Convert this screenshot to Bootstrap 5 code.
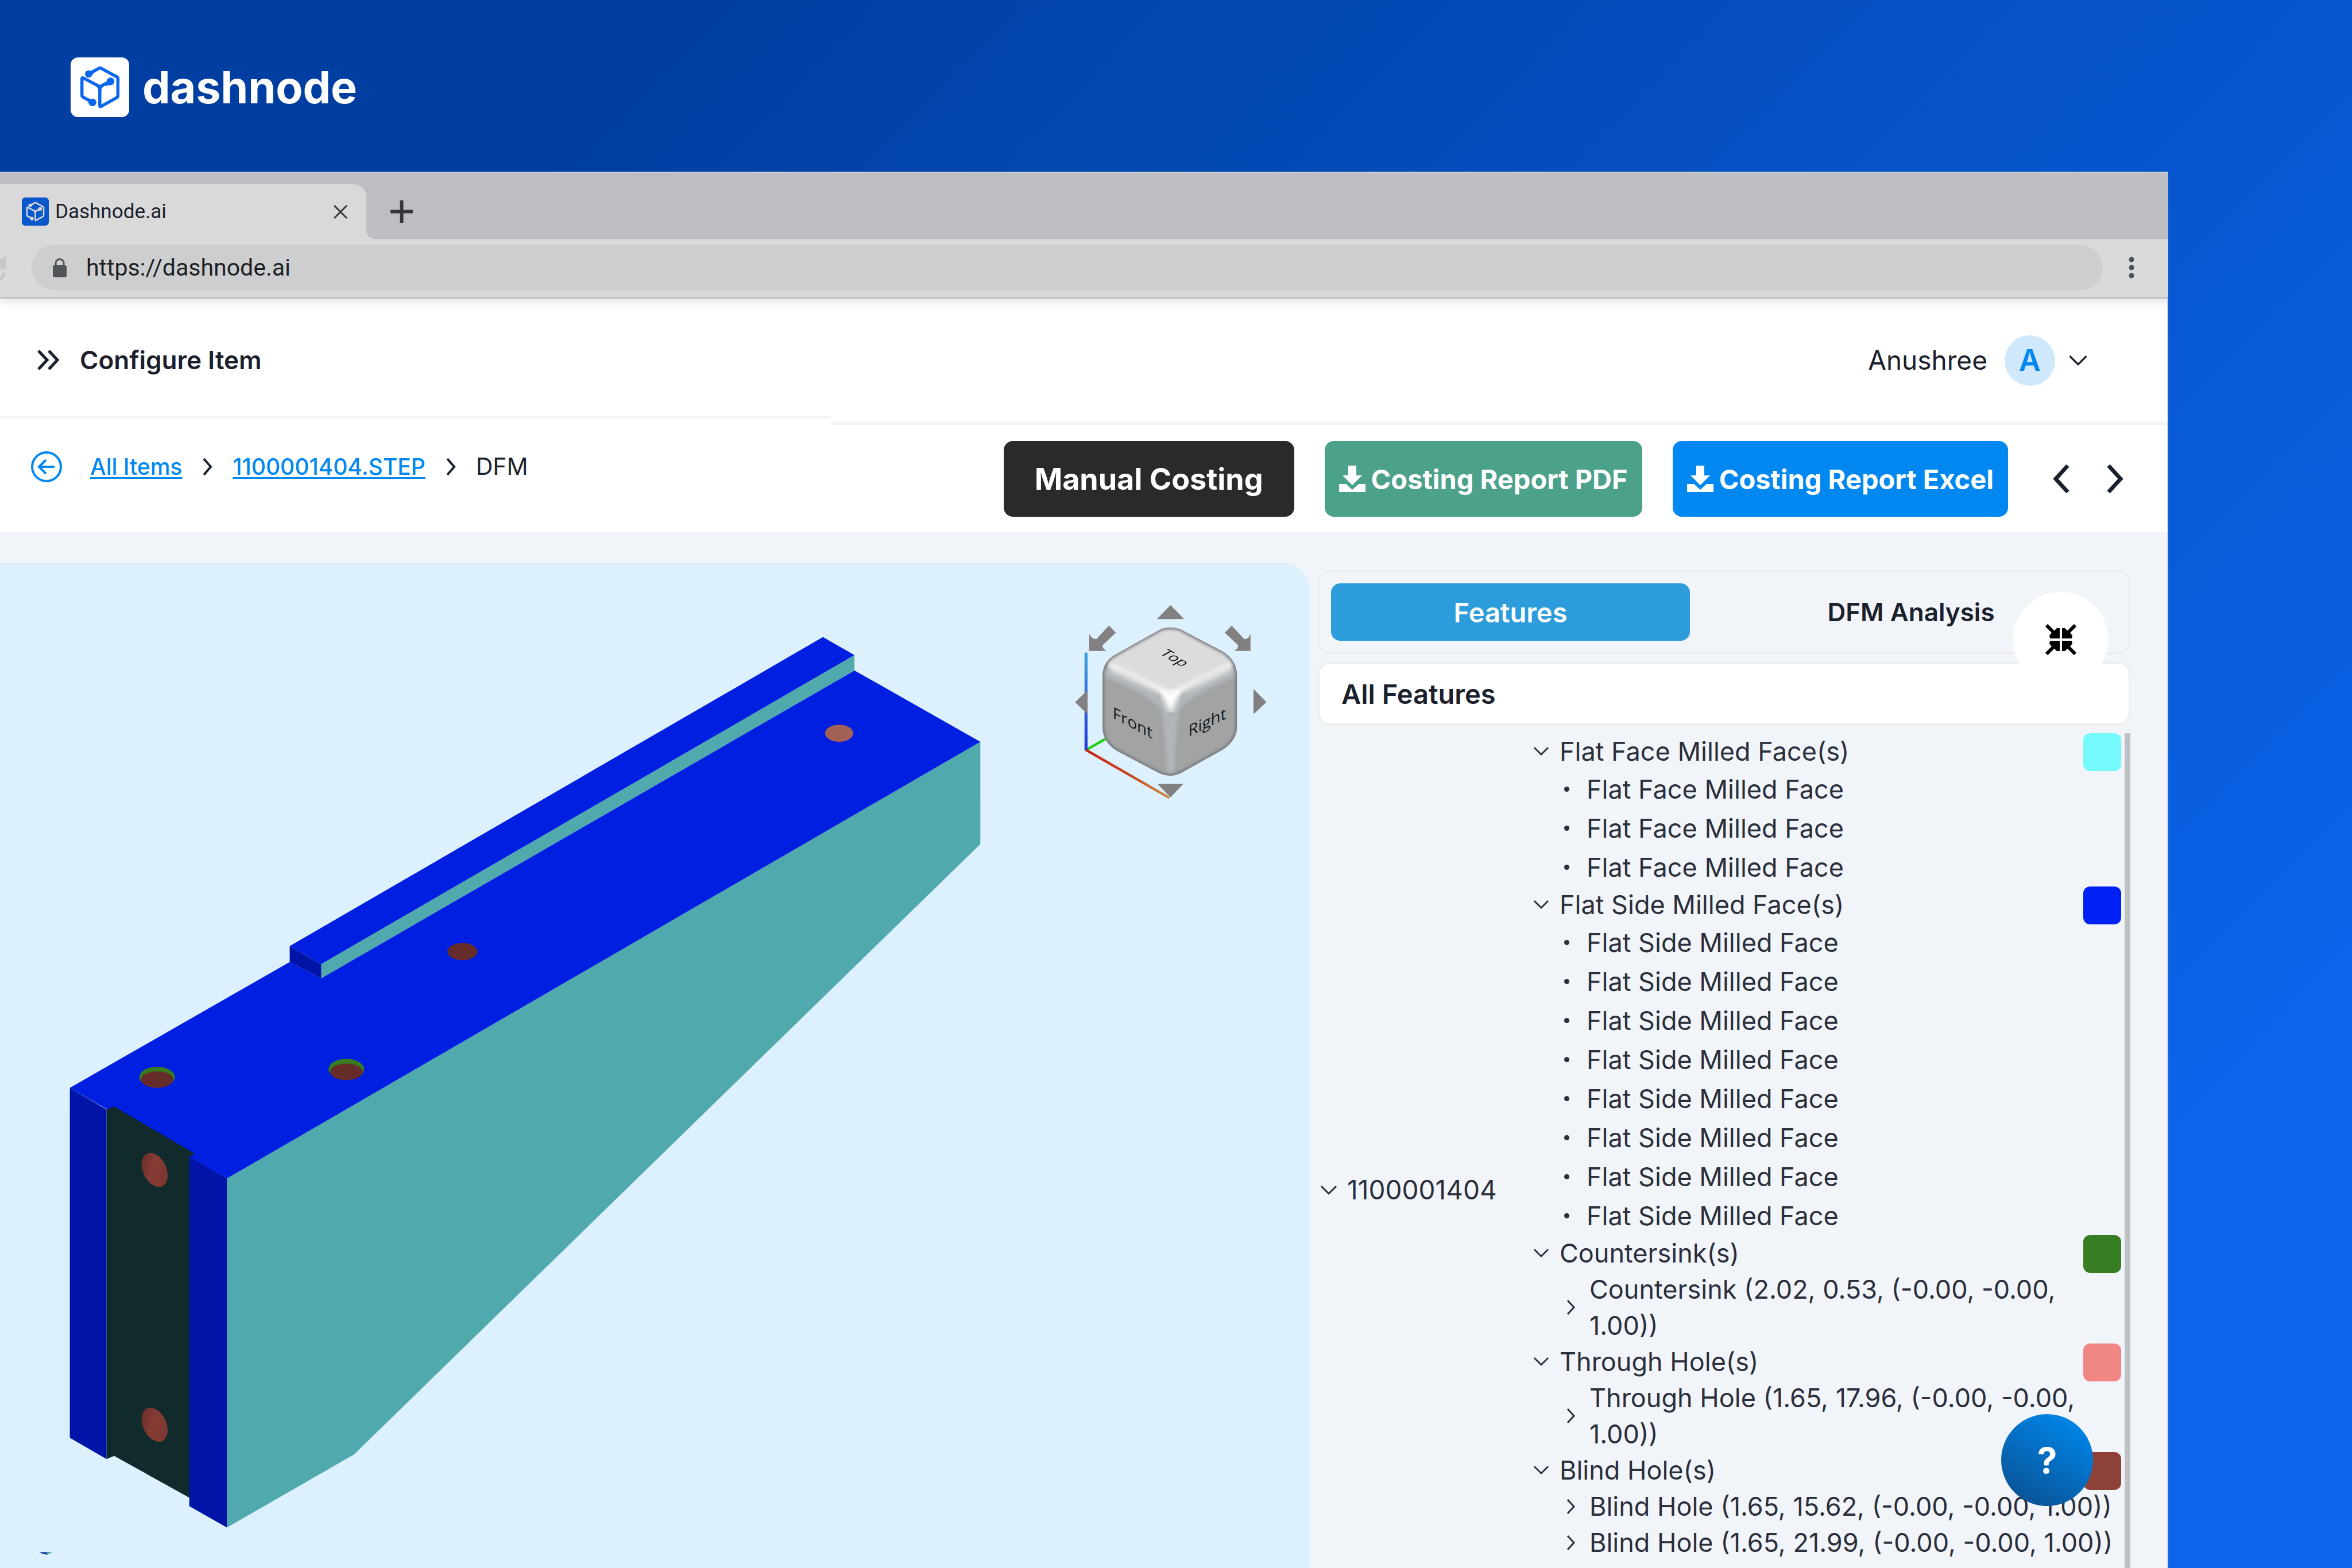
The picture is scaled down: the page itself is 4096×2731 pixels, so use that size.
<!DOCTYPE html>
<html lang="en">
<head>
<meta charset="utf-8">
<meta name="viewport" content="width=device-width, initial-scale=1">
<title>Dashnode.ai</title>
<link href="https://cdn.jsdelivr.net/npm/bootstrap@5.3.0/dist/css/bootstrap.min.css" rel="stylesheet">
<style>
  body {
    font-family: Inter, "Liberation Sans", sans-serif;
    font-size: 45px;
    line-height: 63px;
    color: #1a202c;
    background: linear-gradient(135deg, #003fa1 18%, #0b64ea 85%) fixed;
  }
  svg { flex: none; display: block; }
  button { border: 0; background: none; padding: 0; color: inherit; }

  .brand { padding: 100px 123px 95px; gap: 23px; }
  .brand-name { font-size: 77px; font-weight: 700; line-height: 104px; color: #fff; }

  .browser { margin-right: 320px; min-height: 0; }
  .tab-strip { background: #bcbec3; border-top: 3px solid #c9cbcf; height: 117px; font-family: Roboto, sans-serif; }
  .browser-tab {
    position: relative; width: 638px; height: 95px; padding: 0 33px 0 38px; gap: 11px;
    background: #d9d9d9; border-top-right-radius: 22px; font-size: 35px;
  }
  .browser-tab::after {
    content: ""; position: absolute; left: 100%; bottom: 0; width: 15px; height: 15px;
    background: radial-gradient(circle at 100% 0, transparent 15px, #d9d9d9 15px);
  }
  .new-tab { margin-left: 42px; padding-bottom: 28px; }
  .toolbar {
    position: relative; z-index: 2; background: #d9d9d9; border-bottom: 3px solid #bcbec3;
    height: 104px; padding: 11px 59px 12px 0; gap: 45px;
    box-shadow: 0 4px 16px rgba(0, 0, 0, .14); font-family: Roboto, sans-serif; clip-path: inset(0 0 -24px 0);
  }
  .address { background: #cdced0; border-radius: 39px; height: 78px; padding: 0 36px; gap: 33px; }
  .address input { border: 0; background: none; outline: 0; font-size: 41px; color: #1d1f23; padding: 0; }

  .app { background: #fff; border-right: 2px solid #cfd4dc; min-height: 0; }
  .head-title { width: 1447px; height: 209px; padding: 10px 0 0 65px; gap: 36px; border-bottom: 5px solid #f1f5f9; font-size: 44px; font-weight: 600; }
  .head-user { height: 220px; padding-right: 138px; border-bottom: 5px solid #f1f5f9; font-size: 46px; }
  .avatar { width: 88px; height: 88px; margin: 0 23px 0 30px; background: #cfe8fc; color: #0088f0; font-size: 52px; font-weight: 600; }

  .crumb-bar { height: 187px; padding: 28px 75px 0 53px; }
  .crumbs { gap: 35px; padding-top: 13px; font-size: 39px; }
  .crumbs a { color: #0088f0; font-weight: 500; text-decoration-thickness: 3px; text-underline-offset: 4px; }
  .crumbs .here { font-size: 41px; }
  .crumbs .back { margin-right: 13px; }
  .act { height: 132px; padding: 0 25px; gap: 10px; border-radius: 16px; color: #fff; font-size: 47px; font-weight: 700; }
  .act-dark { background: #2a2a2a; padding: 0 54px; font-size: 52px; }
  .act-green { background: #4ca18a; }
  .act-blue { background: #0088f0; }
  .act-group { gap: 53px; }
  .pager { gap: 65px; margin-left: 24px; }

  .workspace { background: #f1f5f9; padding: 53px 64px 0 0; gap: 13px; min-height: 0; }
  .viewer { background: #ddf0fd; border-top-right-radius: 50px; min-width: 0; overflow: hidden; }
  .panel { position: relative; width: 1415px; padding-top: 13px; min-height: 0; }
  .mode-tabs { border: 3px solid #ececec; border-radius: 21px; padding: 20px; gap: 26px; }
  .mode-tabs button { height: 100px; border-radius: 16px; font-size: 44px; font-weight: 600; }
  .mode-tabs .active { width: 625px; background: #2d9cdb; color: #fff; font-size: 47px; }
  .box-title { background: #fff; border: 3px solid #ececec; border-radius: 21px; height: 110px; margin: 14px 0; padding: 0 38px; font-size: 47px; font-weight: 600; }
  .collapse-btn { position: absolute; top: 51px; right: 38px; width: 166px; height: 166px; background: #fff; }

  .tree { min-height: 0; overflow: hidden; color: #2b2f3b; }
  .tree-body { min-height: 1591px; flex: none; }
  .tree-root { width: 375px; padding-left: 4px; gap: 17px; font-size: 46px; }
  .tree-root, .tree-list { flex: none; }
  .tree-list { width: 1030px; }
  .grp { height: 63px; gap: 18px; padding-right: 6px; }
  .swatch { width: 66px; height: 66px; border-radius: 12px; margin-bottom: -3px; align-self: flex-start; }
  .leaf { height: 68px; padding-left: 54px; gap: 30px; }
  .leaf::before { content: ""; width: 9px; height: 9px; border-radius: 50%; background: #2b2f3b; }
  .sub { padding-left: 58px; padding-right: 6px; gap: 24px; }
  .scroll-thumb { width: 10px; background: #bfc2c5; flex: none; }

  .help { position: absolute; right: 131px; bottom: 108px; z-index: 3; width: 160px; height: 160px; color: #fff; font-size: 62px; font-weight: 700; background: linear-gradient(210deg, #0086ea 10%, #0a5396 90%); }
  .cube-text { font-family: "Open Sans", sans-serif; fill: #16191d; text-anchor: middle; }
</style>
</head>
<body>
<svg width="0" height="0" class="position-absolute" aria-hidden="true">
  <defs>
    <symbol id="mark-cube" viewBox="32 20 574 588">
      <g fill="none" stroke="currentColor" stroke-width="31" stroke-linejoin="round" stroke-linecap="round">
        <path d="M240 166 L310 127 Q319 121 330 127 L486 212 Q496 218 496 228 V398 Q496 409 486 415 L330 503 Q318 509 318 496 V320 Q318 308 307 302 L156 223 Q142 216 142 230 V392 Q142 404 152 410 L215 445"/>
        <path d="M318 330 Q319 308 335 300 L395 268"/>
      </g>
      <g fill="currentColor">
        <circle cx="208" cy="183" r="36"/><path d="M212 148 Q232 152 248 144 L264 172 Q248 180 243 196z"/>
        <circle cx="424" cy="256" r="38"/><path d="M388 246 Q384 265 368 273 L382 302 Q398 290 428 293z"/>
        <circle cx="246" cy="463" r="38"/><path d="M250 426 Q232 434 216 424 L196 450 Q208 458 212 480z"/>
        <path d="M290 296 L318 290 L346 296 L372 290 Q332 318 332 350 H304 Q304 322 280 306z"/>
      </g>
    </symbol>
    <symbol id="chev-down" viewBox="0 0 30 18"><path d="M2 2l13 13L28 2" fill="none" stroke="currentColor" stroke-width="3"/></symbol>
    <symbol id="chev-right" viewBox="0 0 16 28"><path d="M2 2l11 12L2 26" fill="none" stroke="currentColor" stroke-width="3"/></symbol>
    <symbol id="crumb-sep" viewBox="0 0 18 32"><path d="M3 2l12 14L3 30" fill="none" stroke="currentColor" stroke-width="4"/></symbol>
    <symbol id="download" viewBox="0 0 46 46"><path d="M16 0h14v17h10L23 34 6 17h10z" fill="#fff"/><path d="M0 32h12l11 10 11-10h12v14H0z" fill="#fff"/></symbol>
  </defs>
</svg>

<div class="d-flex flex-column vh-100 overflow-hidden position-relative">
  <header class="brand d-flex align-items-center flex-shrink-0">
    <svg width="102" height="104" viewBox="0 0 102 104" style="color:#0b66ee"><rect width="102" height="104" rx="13" fill="#fff"/><use href="#mark-cube" width="102" height="104"/></svg>
    <span class="brand-name">dashnode</span>
  </header>

  <div class="browser d-flex flex-column flex-grow-1 position-relative">
    <div class="tab-strip d-flex align-items-end flex-shrink-0">
      <div class="browser-tab d-flex align-items-center">
        <svg width="47" height="49" viewBox="0 0 47 49" color="#d9d9d9"><rect width="47" height="49" rx="6" fill="#0a56cb"/><use href="#mark-cube" width="47" height="49"/></svg>
        <span>Dashnode.ai</span>
        <button class="ms-auto" aria-label="Close tab"><svg width="24" height="24" viewBox="0 0 24 24"><path d="M1 1l22 22M23 1L1 23" stroke="#35363a" stroke-width="3"/></svg></button>
      </div>
      <button class="new-tab" aria-label="New tab"><svg width="39" height="39" viewBox="0 0 39 39"><path d="M19.500 0v39M0 19.500h39" stroke="#35363a" stroke-width="6"/></svg></button>
    </div>
    <div class="toolbar d-flex align-items-center flex-shrink-0">
      <svg width="10" height="48" viewBox="0 0 10 48"><path d="M0 8l4 2 6-9v25H0zM10 34q-2 9-10 14v-8q3-2 5-8z" fill="#c6c7c9"/></svg>
      <div class="address d-flex align-items-center flex-grow-1">
        <svg width="26" height="33" viewBox="0 0 26 33"><rect x="1" y="12" width="24" height="21" rx="3" fill="#505357"/><path d="M6 13V8a7 6.500 0 0 1 14 0v5" fill="none" stroke="#505357" stroke-width="3"/></svg>
        <input type="text" class="flex-grow-1" value="https://dashnode.ai" aria-label="Address">
      </div>
      <button aria-label="Browser menu"><svg width="10" height="38" viewBox="0 0 10 38" fill="#4b4f57"><circle cx="5" cy="5" r="4.500"/><circle cx="5" cy="19" r="4.500"/><circle cx="5" cy="33" r="4.500"/></svg></button>
    </div>

    <div class="app d-flex flex-column flex-grow-1">
      <div class="d-flex align-items-start flex-shrink-0">
        <div class="head-title d-flex align-items-center">
          <svg width="38" height="36" viewBox="0 0 38 36"><path d="M2 2l15 16L2 34M20 2l15 16-15 16" fill="none" stroke="#1a202c" stroke-width="5"/></svg>
          <span>Configure Item</span>
        </div>
        <div class="head-user d-flex align-items-center justify-content-end flex-grow-1">
          <span>Anushree</span>
          <span class="avatar rounded-circle d-flex align-items-center justify-content-center">A</span>
          <button aria-label="Account menu"><svg width="34" height="20"><use href="#chev-down"/></svg></button>
        </div>
      </div>

      <div class="crumb-bar d-flex align-items-start justify-content-between flex-shrink-0">
        <nav class="crumbs d-flex align-items-center" aria-label="Breadcrumb">
          <a href="#" class="back" aria-label="Back"><svg width="56" height="56" viewBox="0 0 56 56" fill="none" stroke="#0088f0" stroke-width="4"><circle cx="28" cy="28" r="25"/><path d="M42 28H16M27 16L15 28l12 12"/></svg></a>
          <a href="#">All Items</a>
          <svg width="18" height="32"><use href="#crumb-sep"/></svg>
          <a href="#">1100001404.STEP</a>
          <svg width="18" height="32"><use href="#crumb-sep"/></svg>
          <span class="here">DFM</span>
        </nav>
        <div class="act-group d-flex align-items-center">
          <button class="act act-dark">Manual Costing</button>
          <button class="act act-green d-flex align-items-center"><svg width="46" height="46"><use href="#download"/></svg>Costing Report PDF</button>
          <button class="act act-blue d-flex align-items-center"><svg width="46" height="46"><use href="#download"/></svg>Costing Report Excel</button>
          <div class="pager d-flex">
            <button aria-label="Previous"><svg width="30" height="52" viewBox="0 0 30 52"><path d="M27 3L6 26l21 23" fill="none" stroke="#1a202c" stroke-width="7"/></svg></button>
            <button aria-label="Next"><svg width="30" height="52" viewBox="0 0 30 52"><path d="M3 3l21 23L3 49" fill="none" stroke="#1a202c" stroke-width="7"/></svg></button>
          </div>
        </div>
      </div>

      <main class="workspace d-flex flex-grow-1">
        <section class="viewer flex-grow-1" aria-label="3D model">
          <svg width="100%" height="100%" viewBox="0 1837 4279 3283" preserveAspectRatio="xMinYMin slice">
            <defs>
              <linearGradient id="bore" x1="0" y1="0" x2=".7" y2="1"><stop offset="0" stop-color="#622b28"/><stop offset=".5" stop-color="#863b34"/><stop offset="1" stop-color="#7c3731"/></linearGradient>
              <linearGradient id="axis-z" x1="0" y1="0" x2="0" y2="1"><stop offset="0" stop-color="#3aa0de"/><stop offset="1" stop-color="#2433dc"/></linearGradient>
              <linearGradient id="axis-x"><stop offset="0" stop-color="#c8250e"/><stop offset=".5" stop-color="#c8421c"/><stop offset="1" stop-color="#d08e42"/></linearGradient>
              <clipPath id="cube-clip"><path id="cube-outline" d="M680 376Q733 356 790 376L1030 510Q1112 560 1114 660V960Q1114 1040 1040 1098L800 1240Q735 1276 670 1244L430 1110Q352 1060 348 970V660Q350 570 420 530z"/></clipPath>
              <filter id="soft" x="-30%" y="-30%" width="160%" height="160%"><feGaussianBlur stdDeviation="16"/></filter>
              <filter id="softer" x="-30%" y="-30%" width="160%" height="160%"><feGaussianBlur stdDeviation="9"/></filter>
            </defs>
            <path fill="#50a9ac" d="M741 3848L3201 2422V2756L1156 4749 741 4988z"/>
            <path fill="#001fe0" d="M228 3552L946 3141l103 53L2790 2189l411 233L741 3848z"/>
            <path fill="#001fe0" d="M946 3089L2687 2080l103 59L1049 3148z"/>
            <path fill="#50a9ac" d="M1049 3148L2790 2139v50L1049 3194z"/>
            <path fill="#0015a8" d="M946 3089l103 59v46l-103-53z"/>
            <path fill="#0015a8" d="M228 3552l120 71V4764l-120-69z"/>
            <path fill="#112a2c" d="M348 3623l25-10 263 154-17 9V4891L373 4754l-25 10z"/>
            <path fill="#0015a8" d="M618 3776l123 72V4988l-123-70z"/>
            <ellipse cx="513" cy="3517" rx="58" ry="34" fill="#387b20"/><ellipse cx="513" cy="3525" rx="53" ry="27" fill="#652c29"/>
            <ellipse cx="1131" cy="3491" rx="58" ry="34" fill="#387b20"/><ellipse cx="1131" cy="3500" rx="53" ry="27" fill="#652c29"/>
            <ellipse cx="1510" cy="3107" rx="49" ry="28" fill="#652c29"/>
            <ellipse cx="2740" cy="2394" rx="46" ry="28" fill="#a26056"/>
            <ellipse cx="505" cy="3820" rx="38" ry="59" transform="rotate(-25 505 3820)" fill="url(#bore)"/>
            <ellipse cx="505" cy="4652" rx="38" ry="59" transform="rotate(-25 505 4652)" fill="url(#bore)"/>
            <path fill="#1a3aa0" d="M128 5068h28v9l-16-3z"/><path fill="#50a9ac" d="M152 5068h20l-18 9z"/>

            <g transform="translate(3400 1850) scale(.574 .542)">
              <path d="M254 1105L370 1035" stroke="#1fcf14" stroke-width="15"/>
              <rect x="246" y="518" width="17" height="590" fill="url(#axis-z)"/>
              <path d="M254 1104L728 1393" stroke="url(#axis-x)" stroke-width="15"/>
              <g fill="#828080">
                <path d="M735 232l78 84H658zM735 1390l74-82H660zM192 817l71-72v143zM1281 817l-74-80v152z"/>
                <path d="M385 355l39 43-76 76q-2 20 24 34H272V404q16 34 42 32zM1083 355l-39 43 76 76q2 20-24 34h94V404q-10 34-36 32z"/>
              </g>
              <g clip-path="url(#cube-clip)">
                <path d="M300 300H1160V1300H300z" fill="#a1a4a3"/>
                <path d="M380 600Q540 640 735 800Q920 640 1090 600L1090 540 735 340 380 540z" fill="#dcdcdc"/>
                <g fill="none" stroke-linecap="round">
                  <path d="M360 640Q560 720 690 830Q728 880 735 1240M1106 640Q900 720 780 830Q742 880 735 1240" stroke="#b1b5ba" stroke-width="46" filter="url(#softer)"/>
                  <path d="M400 605L690 750Q735 775 780 750L1070 605" stroke="#f0f0f0" stroke-width="44" filter="url(#soft)"/>
                  <path d="M700 765Q735 790 770 765L735 850z" fill="#fff" stroke="#fff" stroke-width="34" filter="url(#soft)"/>
                </g>
                <path d="M470 520L735 375L1000 520L1030 580 735 735 440 580z" fill="#dcdcdc" filter="url(#softer)"/>
                <path d="M735 850V1230" stroke="#a9acab" stroke-width="60" opacity=".7" filter="url(#softer)"/>
                <use href="#cube-outline" fill="none" stroke="#74767b" stroke-width="20" filter="url(#softer)"/>
              </g>
            </g>
            <text class="cube-text" font-size="50" transform="matrix(.86 .5 -.8 .46 3822 2156)">Top</text>
            <text class="cube-text" font-size="52" transform="translate(3698 2378) skewY(28)">Front</text>
            <text class="cube-text" font-size="52" transform="translate(3942 2376) skewY(-26)">Right</text>
          </svg>
        </section>

        <aside class="panel d-flex flex-column flex-shrink-0">
          <div class="mode-tabs d-flex flex-shrink-0">
            <button class="active">Features</button>
            <button class="flex-grow-1">DFM Analysis</button>
          </div>
          <div class="box-title d-flex align-items-center flex-shrink-0">All Features</div>
          <button class="collapse-btn rounded-circle d-flex align-items-center justify-content-center" aria-label="Collapse panel">
            <svg width="54" height="54" viewBox="0 0 54 54"><g id="q"><g id="h"><path d="M2 2l15 15" stroke="#000" stroke-width="6"/><path d="M25 25V7L20 7 15 12 11 15 7 20 8 25z"/></g><use href="#h" transform="matrix(-1 0 0 1 54 0)"/></g><use href="#q" transform="matrix(1 0 0 -1 0 54)"/></svg>
          </button>

          <div class="tree d-flex flex-grow-1">
            <div class="tree-body d-flex">
              <div class="tree-root d-flex align-items-center"><svg width="30" height="18"><use href="#chev-down"/></svg>1100001404</div>
              <ul class="tree-list list-unstyled mb-0">
                <li>
                  <div class="grp d-flex align-items-center"><svg width="28" height="17"><use href="#chev-down"/></svg>Flat Face Milled Face(s)<span class="swatch ms-auto" style="background:#75fbfd"></span></div>
                  <ul class="list-unstyled">
                    <li class="leaf d-flex align-items-center">Flat Face Milled Face</li>
                    <li class="leaf d-flex align-items-center">Flat Face Milled Face</li>
                    <li class="leaf d-flex align-items-center">Flat Face Milled Face</li>
                  </ul>
                </li>
                <li>
                  <div class="grp d-flex align-items-center"><svg width="28" height="17"><use href="#chev-down"/></svg>Flat Side Milled Face(s)<span class="swatch ms-auto" style="background:#0021f5"></span></div>
                  <ul class="list-unstyled">
                    <li class="leaf d-flex align-items-center">Flat Side Milled Face</li>
                    <li class="leaf d-flex align-items-center">Flat Side Milled Face</li>
                    <li class="leaf d-flex align-items-center">Flat Side Milled Face</li>
                    <li class="leaf d-flex align-items-center">Flat Side Milled Face</li>
                    <li class="leaf d-flex align-items-center">Flat Side Milled Face</li>
                    <li class="leaf d-flex align-items-center">Flat Side Milled Face</li>
                    <li class="leaf d-flex align-items-center">Flat Side Milled Face</li>
                    <li class="leaf d-flex align-items-center">Flat Side Milled Face</li>
                  </ul>
                </li>
                <li>
                  <div class="grp d-flex align-items-center"><svg width="28" height="17"><use href="#chev-down"/></svg>Countersink(s)<span class="swatch ms-auto" style="background:#377d22"></span></div>
                  <div class="sub d-flex align-items-center"><svg width="16" height="28"><use href="#chev-right"/></svg><span>Countersink (2.02, 0.53, (-0.00, -0.00, 1.00))</span></div>
                </li>
                <li>
                  <div class="grp d-flex align-items-center"><svg width="28" height="17"><use href="#chev-down"/></svg>Through Hole(s)<span class="swatch ms-auto" style="background:#f08784"></span></div>
                  <div class="sub d-flex align-items-center"><svg width="16" height="28"><use href="#chev-right"/></svg><span>Through Hole (1.65, 17.96, (-0.00, -0.00, 1.00))</span></div>
                </li>
                <li>
                  <div class="grp d-flex align-items-center"><svg width="28" height="17"><use href="#chev-down"/></svg>Blind Hole(s)<span class="swatch ms-auto" style="background:#8e4138"></span></div>
                  <div class="sub d-flex align-items-center"><svg width="16" height="28"><use href="#chev-right"/></svg><span>Blind Hole (1.65, 15.62, (-0.00, -0.00, 1.00))</span></div>
                  <div class="sub d-flex align-items-center"><svg width="16" height="28"><use href="#chev-right"/></svg><span>Blind Hole (1.65, 21.99, (-0.00, -0.00, 1.00))</span></div>
                </li>
              </ul>
            </div>
            <div class="scroll-thumb"></div>
          </div>
        </aside>
      </main>
    </div>
    <button class="help rounded-circle" aria-label="Help">?</button>
  </div>
</div>
<script src="https://cdn.jsdelivr.net/npm/bootstrap@5.3.0/dist/js/bootstrap.bundle.min.js"></script>
</body>
</html>
